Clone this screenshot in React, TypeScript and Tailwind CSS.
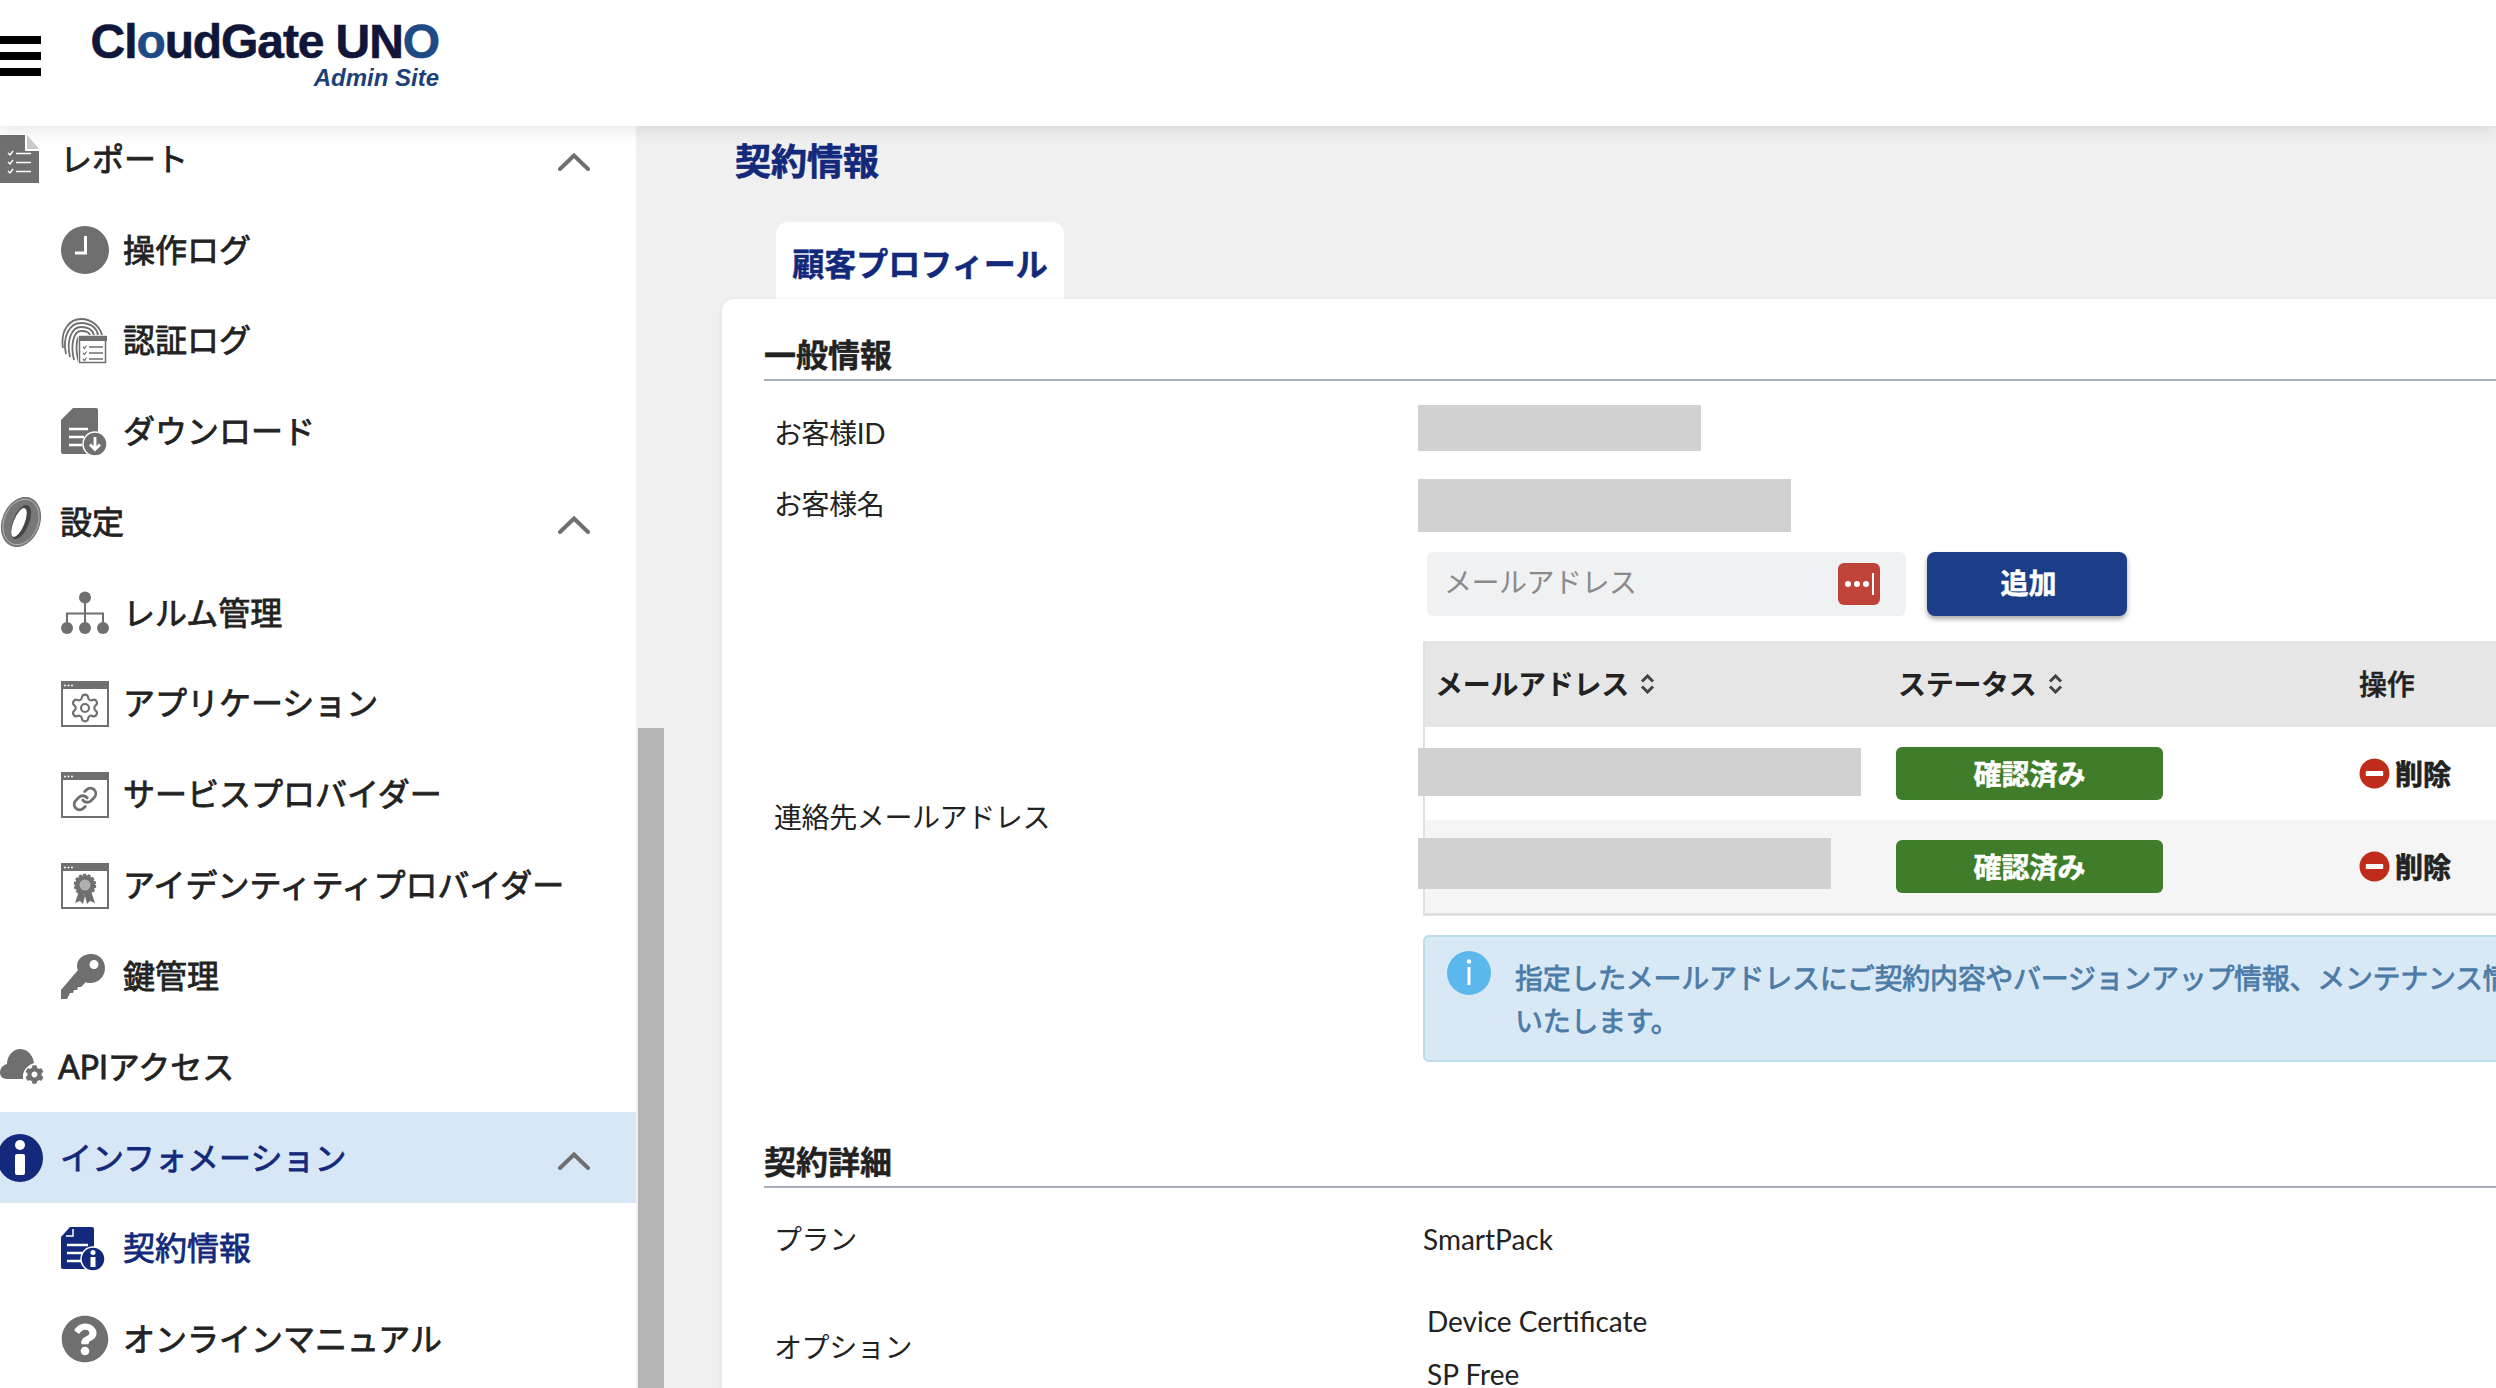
import { type ReactNode } from "react";
import { Settings, Link as LinkIcon } from "lucide-react";
import { FaMinusCircle, FaQuestionCircle, FaCog } from "react-icons/fa";

const GRAY = "#6f6f6f";
const NAVY = "#13297b";

function ReportIcon() {
  return (
    <svg width="39" height="48" viewBox="0 0 39 48">
      <path d="M0 0H25V16H39V48H0Z" fill={GRAY} />
      <path d="M27 0L39 14H27Z" fill="#c9c9c9" />
      <path d="M8 18l2 2 3-4M8 27l2 2 3-4M8 36l2 2 3-4" stroke="#fff" strokeWidth="1.4" fill="none" />
      <path d="M16 18.500H31M16 27.500H31M16 36.500H31" stroke="#fff" strokeWidth="1.6" />
    </svg>
  );
}

function ClockIcon() {
  return (
    <svg width="48" height="48" viewBox="0 0 48 48">
      <circle cx="24" cy="24" r="24" fill={GRAY} />
      <path d="M24.500 10V27H14" stroke="#fff" strokeWidth="3" fill="none" />
    </svg>
  );
}

function FingerprintIcon() {
  return (
    <svg width="46" height="46" viewBox="0 0 46 46">
      <g fill="none" stroke={GRAY} strokeWidth="1.800">
        <path d="M2 30C-1 12 9 1 20 1s19 8 21 16" />
        <path d="M5 36C1 18 9 5 20 5s16 6 17 12" />
        <path d="M9 39C5 22 11 9 20 9s12 4 13 8" />
        <path d="M13 42C9 26 13 13 20 13s8 2 9 4" />
        <path d="M18 45C14 32 15 18 20 18s5 1 5 1" />
        <path d="M21 30c0 5 1 10 3 14" />
      </g>
      <rect x="17" y="17" width="29" height="29" fill="#fff" />
      <rect x="18.500" y="18.500" width="26" height="26" fill="#fff" stroke={GRAY} strokeWidth="1.500" />
      <rect x="18" y="18" width="28" height="5" fill={GRAY} />
      <path d="M22 29l1.500 1.500 2-3M22 35l1.500 1.500 2-3M22 41l1.500 1.500 2-3" stroke={GRAY} strokeWidth="1.200" fill="none" />
      <path d="M28 29H42M28 35H42M28 41H42" stroke={GRAY} strokeWidth="1.400" />
    </svg>
  );
}

function DownloadIcon() {
  return (
    <svg width="46" height="48" viewBox="0 0 46 48">
      <path d="M12 0H35a2 2 0 0 1 2 2V46H2a2 2 0 0 1-2-2V12Z" fill={GRAY} />
      <path d="M8 21H27M8 29H23M8 37H21" stroke="#fff" strokeWidth="2.500" />
      <circle cx="34" cy="36" r="12" fill={GRAY} stroke="#fff" strokeWidth="1.500" />
      <path d="M34 29V41M29 36.500l5 5 5-5" stroke="#fff" strokeWidth="2.800" fill="none" />
    </svg>
  );
}

function TireIcon() {
  return (
    <svg width="42" height="50" viewBox="0 0 42 50">
      <ellipse cx="21" cy="25" rx="19" ry="26" transform="rotate(22 21 25)" fill="#777777" />
      <ellipse cx="21" cy="25" rx="17" ry="23.500" transform="rotate(22 21 25)" fill="none" stroke="#bdbdbd" strokeWidth="0.800" />
      <ellipse cx="21" cy="25" rx="8" ry="18" transform="rotate(22 21 25)" fill="#454545" />
      <ellipse cx="19" cy="25.500" rx="5.500" ry="15.500" transform="rotate(22 19 25.500)" fill="#fff" />
    </svg>
  );
}

function RealmIcon() {
  return (
    <svg width="48" height="44" viewBox="0 0 48 44" fill={GRAY}>
      <circle cx="24" cy="6.500" r="6" />
      <circle cx="6" cy="37" r="6" />
      <circle cx="24" cy="37" r="6" />
      <circle cx="42" cy="37" r="6" />
      <path d="M24 12V32M6 33V22.500H42V33" stroke={GRAY} strokeWidth="2" fill="none" />
    </svg>
  );
}

function WindowIcon({ children }: { children: ReactNode }) {
  return (
    <svg width="48" height="46" viewBox="0 0 48 46">
      <rect x="1" y="1" width="46" height="44" fill="#fff" stroke={GRAY} strokeWidth="2" />
      <rect x="0" y="0" width="48" height="8" fill={GRAY} />
      <circle cx="4" cy="4.500" r="1" fill="#fff" />
      <circle cx="7.500" cy="4.500" r="1" fill="#fff" />
      <circle cx="11" cy="4.500" r="1" fill="#fff" />
      {children}
    </svg>
  );
}

function RosetteMark() {
  return (
    <g fill={GRAY}>
      <path d="M18 28L14 40l5-2 3 3 2-8zM30 28l4 12-5-2-3 3-2-8z" />
      <circle cx="24" cy="22" r="10" stroke={GRAY} strokeWidth="2.500" strokeDasharray="3 1.500" />
      <circle cx="24" cy="22" r="5.500" fill="#b0b0b0" />
    </g>
  );
}

function KeyIcon() {
  return (
    <svg width="44" height="45" viewBox="0 0 44 45">
      <path
        fill={GRAY}
        fillRule="evenodd"
        d="M30 0c8 0 14 6 14 14 0 9-7 15-15 15-2 0-3 0-4-1l-5 5h-3l-1 3h-3l-1 3h-3l-3 6H0V36L17 16c-1-2-1-3-1-4C16 5 22 0 30 0Zm3 6a4.500 4.500 0 1 0 0 9 4.500 4.500 0 0 0 0-9Z"
      />
    </svg>
  );
}

function ApiIcon() {
  return (
    <svg width="44" height="36" viewBox="0 0 44 36">
      <path
        fill={GRAY}
        d="M0 24c0-5 3-8 7-9 0-8 6-15 13-15 6 0 11 4 13 10l1 4c-6 2-11 7-11 13v3H7c-4 0-7-3-7-6Z"
      />
      <foreignObject x="24" y="14" width="20" height="22">
        <div className="flex h-[22px] w-[20px] items-center justify-center">
          <FaCog size={19} color={GRAY} />
        </div>
      </foreignObject>
    </svg>
  );
}

function InfoFilledIcon() {
  return (
    <svg width="43" height="48" viewBox="0 0 43 48">
      <ellipse cx="20" cy="24" rx="23" ry="24" fill={NAVY} />
      <circle cx="20" cy="11" r="5" fill="#fff" />
      <rect x="15" y="20" width="10" height="21" rx="2" fill="#fff" />
    </svg>
  );
}

function ContractIcon() {
  return (
    <svg width="44" height="44" viewBox="0 0 44 44">
      <path d="M9 0H31a2 2 0 0 1 2 2V42H2a2 2 0 0 1-2-2V10Z" fill={NAVY} />
      <path d="M6 18H27M6 26H24M6 34H21" stroke="#fff" strokeWidth="2.500" />
      <path d="M12 2V9H5" stroke="#fff" strokeWidth="1.500" fill="none" />
      <circle cx="32" cy="32" r="12" fill={NAVY} stroke="#fff" strokeWidth="1.500" />
      <circle cx="32" cy="25.500" r="2.500" fill="#fff" />
      <rect x="29.500" y="30" width="5" height="10" fill="#fff" />
    </svg>
  );
}

function Chevron() {
  return (
    <svg width="32" height="18" viewBox="0 0 32 18" fill="none">
      <path d="M2 16L16 2.500L30 16" stroke={GRAY} strokeWidth="4" strokeLinecap="round" />
    </svg>
  );
}

function SortIcon() {
  return (
    <svg width="15" height="20" viewBox="0 0 15 20" fill="none">
      <path d="M2 7.500L7.500 2L13 7.500M2 12.500L7.500 18L13 12.500" stroke="#444" strokeWidth="3" />
    </svg>
  );
}

function SectionRow({
  icon,
  label,
  chevron,
  active,
}: {
  icon: ReactNode;
  label: string;
  chevron?: boolean;
  active?: boolean;
}) {
  return (
    <div
      className={`flex h-[90.77px] items-center pr-[46px] ${active ? "bg-[#d8e7f6] text-[#13297b]" : "text-[#222222]"}`}
    >
      <div className="flex w-[60px] shrink-0 items-center">{icon}</div>
      <span className={`flex-1 text-[32px] [-webkit-text-stroke:0.8px_currentColor] ${label.startsWith("API") ? "-ml-[2px]" : ""}`}>
        {label}
      </span>
      {chevron && (
        <span className="mt-[6px] flex">
          <Chevron />
        </span>
      )}
    </div>
  );
}

function SubRow({ icon, label, active }: { icon: ReactNode; label: string; active?: boolean }) {
  return (
    <div className={`flex h-[90.77px] items-center pl-[60px] ${active ? "text-[#13297b]" : "text-[#222222]"}`}>
      <div className="flex w-[63px] shrink-0 items-center pl-px">{icon}</div>
      <span className="-mt-[1px] text-[32px] [-webkit-text-stroke:0.8px_currentColor]">{label}</span>
    </div>
  );
}

function Sidebar() {
  return (
    <div className="flex w-[636px] shrink-0 flex-col overflow-hidden bg-white">
      <div className="-mt-[12px] flex flex-col">
        <SectionRow icon={<ReportIcon />} label="レポート" chevron />
        <SubRow icon={<ClockIcon />} label="操作ログ" />
        <SubRow icon={<FingerprintIcon />} label="認証ログ" />
        <SubRow icon={<DownloadIcon />} label="ダウンロード" />
        <SectionRow icon={<TireIcon />} label="設定" chevron />
        <SubRow icon={<RealmIcon />} label="レルム管理" />
        <SubRow
          icon={
            <WindowIcon>
              <Settings x={8} y={11} width={32} height={32} color={GRAY} strokeWidth={1.6} />
            </WindowIcon>
          }
          label="アプリケーション"
        />
        <SubRow
          icon={
            <WindowIcon>
              <LinkIcon x={11} y={14} width={26} height={26} color={GRAY} strokeWidth={2.6} />
            </WindowIcon>
          }
          label="サービスプロバイダー"
        />
        <SubRow
          icon={
            <WindowIcon>
              <RosetteMark />
            </WindowIcon>
          }
          label="アイデンティティプロバイダー"
        />
        <SubRow icon={<KeyIcon />} label="鍵管理" />
        <SectionRow icon={<ApiIcon />} label="APIアクセス" />
        <SectionRow icon={<InfoFilledIcon />} label="インフォメーション" chevron active />
        <SubRow icon={<ContractIcon />} label="契約情報" active />
        <SubRow icon={<FaQuestionCircle size={48} color={GRAY} />} label="オンラインマニュアル" />
      </div>
    </div>
  );
}

function SectionHeading({ children, className }: { children: ReactNode; className: string }) {
  return (
    <div
      className={`border-b-2 border-[#a8aebc] pb-[2px] text-[32px] leading-[44px] font-bold text-[#222222] [-webkit-text-stroke:0.4px_currentColor] ${className}`}
    >
      {children}
    </div>
  );
}

function FieldRow({
  label,
  labelPad,
  className,
  children,
}: {
  label: string;
  labelPad: string;
  className: string;
  children: ReactNode;
}) {
  return (
    <div className={`grid grid-cols-[654px_1fr] ${className}`}>
      <div className={`pl-[10px] text-[28px] leading-[40px] tracking-[-0.4px] text-[#222222] ${labelPad}`}>{label}</div>
      <div>{children}</div>
    </div>
  );
}

function EmailRow({ maskClass, rowClass }: { maskClass: string; rowClass: string }) {
  return (
    <div className={`grid h-[93px] grid-cols-[471px_463px_1fr] ${rowClass}`}>
      <div className={`-ml-[7px] bg-[#d1d1d1] ${maskClass}`} />
      <div className="mt-[20px] flex h-[53px] w-[267px] items-center justify-center rounded-[6px] bg-[#3f7d2b] text-[28px] font-bold text-white [-webkit-text-stroke:0.5px_currentColor]">
        確認済み
      </div>
      <div className="flex items-center gap-[5px] text-[28px] font-bold text-[#222222] [-webkit-text-stroke:0.7px_currentColor]">
        <FaMinusCircle size={31} color="#bf2c1a" />
        <span>削除</span>
      </div>
    </div>
  );
}

function MainPanel() {
  return (
    <div className="flex min-w-0 flex-1 flex-col overflow-hidden bg-[#f0f0f0]">
      <h1 className="mt-[10px] shrink-0 pl-[69px] text-[36px] leading-[50px] font-bold text-[#13297b] [-webkit-text-stroke:0.7px_currentColor]">
        契約情報
      </h1>
      <div className="mt-[36px] ml-[110px] flex h-[77px] w-[288px] shrink-0 items-center justify-center rounded-t-[12px] bg-white pt-[6px] text-[32px] font-bold text-[#13297b] [-webkit-text-stroke:0.5px_currentColor]">
        顧客プロフィール
      </div>
      <div className="ml-[56px] w-[1900px] shrink-0 grow rounded-tl-[12px] bg-white pl-[42px] shadow-[0_0_6px_rgba(0,0,0,0.06)]">
        <SectionHeading className="pt-[34px]">一般情報</SectionHeading>

        <FieldRow label="お客様ID" labelPad="pt-[8px]" className="mt-[24px]">
          <div className="h-[46px] w-[283px] bg-[#d1d1d1]" />
        </FieldRow>
        <FieldRow label="お客様名" labelPad="pt-[5px]" className="mt-[26px]">
          <div className="h-[53px] w-[373px] bg-[#d1d1d1]" />
        </FieldRow>

        <FieldRow label="連絡先メールアドレス" labelPad="pt-[245px]" className="mt-[20px]">
          <div className="flex gap-[21px] pl-[9px]">
            <div className="flex h-[64px] w-[479px] items-center justify-between rounded-[6px] bg-[#eff1f3] pr-[26px] pl-[17px]">
              <span className="-mt-[4px] text-[28px] tracking-[-0.5px] text-[#8a8a8a]">メールアドレス</span>
              <span className="flex h-[42px] w-[42px] items-center justify-center gap-[3px] rounded-[6px] bg-[#c0433a]">
                <i className="h-[6px] w-[6px] rounded-full bg-white" />
                <i className="h-[6px] w-[6px] rounded-full bg-white" />
                <i className="h-[6px] w-[6px] rounded-full bg-white" />
                <i className="h-[22px] w-[2px] bg-white" />
              </span>
            </div>
            <button className="h-[64px] w-[200px] rounded-[8px] bg-[#1c3d87] pb-[2px] pl-[3px] text-[28px] font-bold text-white shadow-[0_3px_5px_rgba(0,0,0,0.35)] [-webkit-text-stroke:0.5px_currentColor]">
              追加
            </button>
          </div>

          <div className="mt-[25px] ml-[5px] border-b-[3px] border-l-2 border-[#e0e0e0]">
            <div className="grid h-[86px] grid-cols-[471px_463px_1fr] items-center bg-[#e6e6e6] text-[28px] font-bold tracking-[-0.3px] text-[#222222]">
              <div className="flex items-center gap-[11px] pl-[10px]">
                メールアドレス
                <SortIcon />
              </div>
              <div className="flex items-center gap-[11px] pl-[2px]">
                ステータス
                <SortIcon />
              </div>
              <div className="font-medium [-webkit-text-stroke:0.5px_currentColor]">操作</div>
            </div>
            <EmailRow maskClass="mt-[21px] h-[48px] w-[443px]" rowClass="bg-white" />
            <EmailRow maskClass="mt-[18px] h-[51px] w-[413px]" rowClass="bg-[#f5f5f5]" />
          </div>

          <div className="mt-[19px] ml-[5px] flex h-[127px] gap-[24px] rounded-[6px] border-2 border-[#bcdcea] bg-[#d9e8f5] pl-[22px]">
            <svg className="mt-[14px] shrink-0" width="44" height="44" viewBox="0 0 44 44">
              <circle cx="22" cy="22" r="22" fill="#5cb8ec" />
              <circle cx="22" cy="10.500" r="2.200" fill="#fff" />
              <rect x="20.500" y="16" width="3" height="18" fill="#fff" />
            </svg>
            <p className="pt-[20px] text-[28px] leading-[43px] tracking-[-0.3px] whitespace-nowrap text-[#4b7ba7] [-webkit-text-stroke:0.8px_currentColor]">
              指定したメールアドレスにご契約内容やバージョンアップ情報、メンテナンス情報などをお知らせ
              <br />
              いたします。
            </p>
          </div>
        </FieldRow>

        <SectionHeading className="mt-[78px]">契約詳細</SectionHeading>

        <FieldRow label="プラン" labelPad="" className="mt-[31px]">
          <div className="pl-[5px] text-[28px] leading-[40px] text-[#222222]">SmartPack</div>
        </FieldRow>
        <FieldRow label="オプション" labelPad="pt-[26px]" className="mt-[42px]">
          <div className="flex flex-col gap-[13px] pl-[9px] text-[28px] leading-[40px] text-[#222222]">
            <div>Device Certificate</div>
            <div>SP Free</div>
          </div>
        </FieldRow>
      </div>
    </div>
  );
}

export default function App() {
  return (
    <div className="flex h-screen w-screen flex-col overflow-hidden bg-[#f0f0f0] [font-family:Lato,'Noto_Sans_CJK_JP',sans-serif]">
      <header className="relative z-10 flex h-[126px] shrink-0 items-start bg-white shadow-[0_4px_16px_rgba(0,0,0,0.1)]">
        <div className="mt-[36px] flex w-[41px] flex-col gap-[8px]">
          <span className="h-[8px] bg-black" />
          <span className="h-[8px] bg-black" />
          <span className="h-[8px] bg-black" />
        </div>
        <div className="mt-[19px] ml-[52px] flex w-[346px] flex-col items-end [font-family:'Liberation_Sans',sans-serif]">
          <div className="text-[48px] leading-[46px] font-bold tracking-[-1.1px] whitespace-nowrap text-[#10163a] [-webkit-text-stroke:0.6px_currentColor]">
            Cl<span className="text-[#1e4a85]">o</span>udGate UN<span className="text-[#1e4a85]">O</span>
          </div>
          <div className="text-[24px] leading-[26px] font-bold italic text-[#1c3f78]">Admin Site</div>
        </div>
      </header>
      <div className="flex min-h-0 flex-1">
        <Sidebar />
        <div className="w-[30px] shrink-0 bg-[#f0f0f0] px-[2px] pt-[602px]">
          <div className="h-full bg-[#b5b5b5]" />
        </div>
        <MainPanel />
      </div>
    </div>
  );
}
